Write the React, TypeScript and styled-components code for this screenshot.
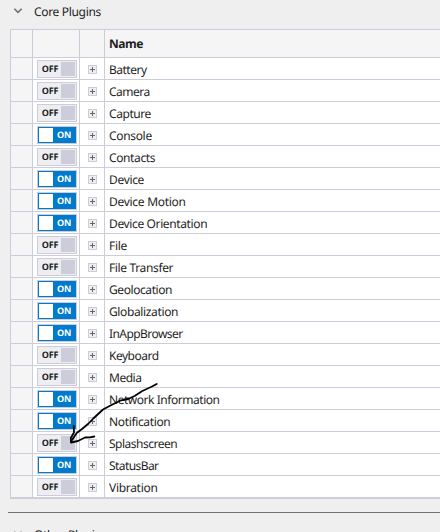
import React from "react";
import styled, { createGlobalStyle } from "styled-components";

const line = "#ccccdb";

const GlobalStyle = createGlobalStyle`
  html, body { margin: 0; height: 100%; overflow: hidden; background: #efefef; }
  *, *::before, *::after { box-sizing: border-box; }
`;

const Page = styled.main`
  position: relative;
  width: 440px;
  height: 532px;
  overflow: hidden;
  background: #efefef;
  color: #1e1e1e;
  font: 12px/21px "Noto Sans", "Open Sans", sans-serif;
  text-rendering: geometricPrecision;
`;

const SectionHeader = styled.header<{ $top?: number }>`
  display: flex;
  align-items: center;
  gap: 11px;
  height: 22px;
  padding-left: 13px;
  margin-top: ${(p) => p.$top ?? 0}px;
`;

const Label = styled.span<{ $spacing?: number }>`
  white-space: nowrap;
  letter-spacing: ${(p) => p.$spacing ?? 0}px;
`;

const Grid = styled.section`
  width: 430px;
  margin: 7px 0 0 10px;
  border: solid ${line};
  border-width: 1px 0 1px 1px;
  background: #fff;
`;

const Row = styled.div<{ $head?: boolean }>`
  display: grid;
  grid-template-columns: 22px 47px 25px 1fr;
  grid-template-rows: 100%;
  height: ${(p) => (p.$head ? 28 : 22)}px;
  border-bottom: 1px solid ${line};
  background: ${(p) => (p.$head ? "#f5f5f5" : "#fff")};
  font-weight: ${(p) => (p.$head ? 700 : 400)};
  line-height: ${(p) => (p.$head ? 27 : 23)}px;
`;

const Cell = styled.div<{ $gutter?: boolean }>`
  border-right: 1px solid ${line};
  background: ${(p) => (p.$gutter ? "#f5f5f5" : "transparent")};
`;

const ToggleCell = styled(Cell)`
  padding: 2px 0 0 4px;
`;

const ExpandCell = styled(Cell)`
  padding: 7px 0 0 8px;
`;

const NameCell = styled.div`
  padding-left: 4px;
`;

const Toggle = styled.div<{ $on: boolean }>`
  display: flex;
  flex-direction: ${(p) => (p.$on ? "row-reverse" : "row")};
  width: 40px;
  height: 18px;
  padding: 1px;
  border: 1px solid ${line};
  background: ${(p) => (p.$on ? "#007acc" : "#eeeef2")};
  color: ${(p) => (p.$on ? "#fff" : "#1e1e1e")};
  font: 700 9px/14px "Open Sans", sans-serif;
`;

const ToggleText = styled.span`
  width: 22px;
  text-align: center;
  letter-spacing: -0.2px;
`;

const Knob = styled.span<{ $on: boolean }>`
  width: 14px;
  height: 14px;
  background: ${(p) => (p.$on ? "#fff" : line)};
`;

const Icon = styled.svg`
  display: block;
  flex: none;
`;

const Divider = styled.hr`
  width: 432px;
  height: 1px;
  margin: 13px 0 0 8px;
  border: 0;
  background: #717171;
`;

const Annotation = styled.svg`
  position: absolute;
  left: 60px;
  top: 375px;
`;

const plugins: { name: string; on: boolean; spacing: number }[] = [
  { name: "Battery", on: false, spacing: -0.5 },
  { name: "Camera", on: false, spacing: -0.5 },
  { name: "Capture", on: false, spacing: -0.43 },
  { name: "Console", on: true, spacing: -0.33 },
  { name: "Contacts", on: false, spacing: -0.38 },
  { name: "Device", on: true, spacing: -0.33 },
  { name: "Device Motion", on: true, spacing: -0.28 },
  { name: "Device Orientation", on: true, spacing: -0.37 },
  { name: "File", on: false, spacing: -0.3 },
  { name: "File Transfer", on: false, spacing: -0.36 },
  { name: "Geolocation", on: true, spacing: -0.42 },
  { name: "Globalization", on: true, spacing: -0.37 },
  { name: "InAppBrowser", on: true, spacing: -0.56 },
  { name: "Keyboard", on: false, spacing: -0.5 },
  { name: "Media", on: false, spacing: -0.5 },
  { name: "Network Information", on: true, spacing: -0.46 },
  { name: "Notification", on: true, spacing: -0.35 },
  { name: "Splashscreen", on: false, spacing: -0.5 },
  { name: "StatusBar", on: true, spacing: -0.58 },
  { name: "Vibration", on: false, spacing: -0.3 },
];

const Chevron = () => (
  <Icon width="10" height="8" viewBox="0 0 10 8">
    <path d="M1.3 1.7 5 5.4 8.7 1.7" fill="none" stroke="#717171" strokeWidth="1.6" />
  </Icon>
);

const Expander = () => (
  <Icon width="9" height="9" viewBox="0 0 9 9" shapeRendering="crispEdges">
    <rect x=".5" y=".5" width="8" height="8" fill="#eeeef2" stroke={line} />
    <path d="M2 4.5h5M4.5 2v5" stroke="#666" />
  </Icon>
);

export default function App() {
  return (
    <>
      <GlobalStyle />
      <Page>
        <SectionHeader>
          <Chevron />
          <Label $spacing={-0.33}>Core Plugins</Label>
        </SectionHeader>
        <Grid>
          <Row $head>
            <Cell />
            <Cell />
            <Cell />
            <NameCell>
              <Label $spacing={-0.5}>Name</Label>
            </NameCell>
          </Row>
          {plugins.map((p) => (
            <Row key={p.name}>
              <Cell $gutter />
              <ToggleCell>
                <Toggle $on={p.on}>
                  <ToggleText>{p.on ? "ON" : "OFF"}</ToggleText>
                  <Knob $on={p.on} />
                </Toggle>
              </ToggleCell>
              <ExpandCell>
                <Expander />
              </ExpandCell>
              <NameCell>
                <Label $spacing={p.spacing}>{p.name}</Label>
              </NameCell>
            </Row>
          ))}
        </Grid>
        <Divider />
        <SectionHeader $top={10}>
          <Chevron />
          <Label $spacing={-0.33}>Other Plugins</Label>
        </SectionHeader>
        <Annotation width="105" height="75" viewBox="60 375 105 75">
          <g fill="none" stroke="#000" strokeWidth="1.8" strokeLinecap="round" strokeLinejoin="round">
            <path d="M156.7 384 L151.5 386.8 L142.3 391 L135 395.7 L128.3 399 L120 400.7 L110 405.7 L103 409.5 L93.3 418.5 L88 424 L82 429 L76.7 433 L71 441.5" />
            <path d="M73.7 426 L74 432.5 L70.8 438 L71 442.5 L78 441 L85 437.5 L90 437.3 L94.3 436.5" />
          </g>
        </Annotation>
      </Page>
    </>
  );
}
